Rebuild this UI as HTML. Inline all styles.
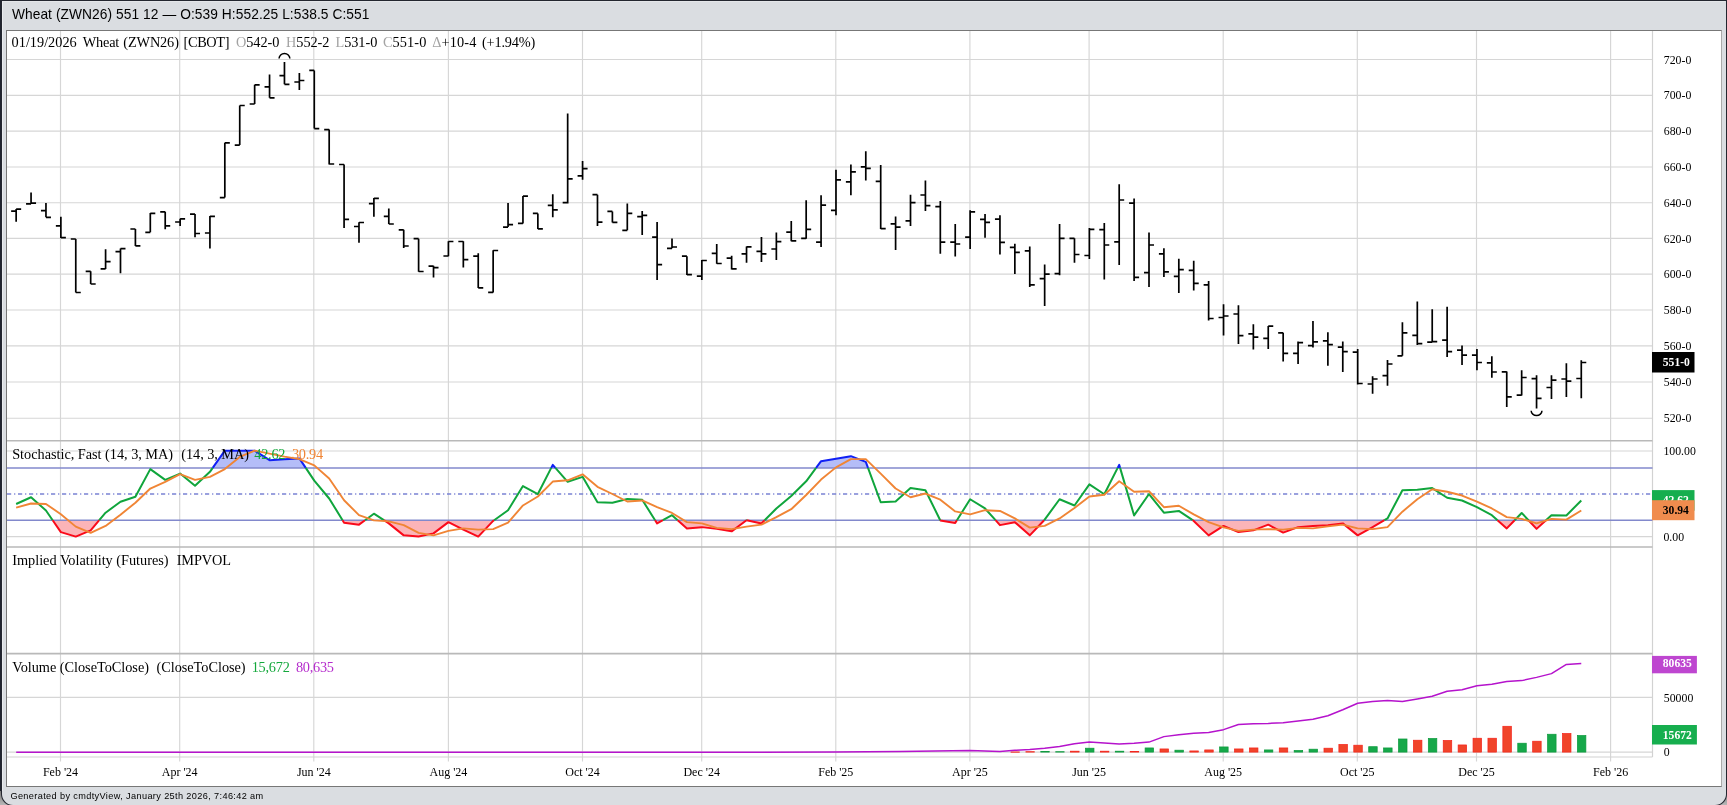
<!DOCTYPE html>
<html><head><meta charset="utf-8"><title>Wheat (ZWN26)</title>
<style>
html,body{margin:0;padding:0;}
body{width:1727px;height:805px;overflow:hidden;background:#20242f;position:relative;font-family:"Liberation Sans",sans-serif;}
#win{position:absolute;left:2px;top:1px;width:1724px;height:804px;background:#dadde1;border-radius:0 0 11px 11px;box-shadow:0 0 0 1px #23262f;}
.cr{position:absolute;bottom:0;width:14px;height:14px;background:linear-gradient(#777,#b8b8b8);}
#ht{position:absolute;left:2px;top:1px;width:1723px;height:1px;background:#e4e6e9;}
#hl{position:absolute;left:2px;top:1px;width:1px;height:790px;background:#e9ebee;}
#hdr{position:absolute;left:12px;top:6px;font-size:13.9px;line-height:16px;color:#000;white-space:nowrap;}
#ftr{position:absolute;left:10px;top:790px;font-size:10px;line-height:12px;color:#000;white-space:nowrap;}
#panel{position:absolute;left:6px;top:30px;width:1716px;height:757px;background:#fff;box-sizing:border-box;border-top:1px solid #777;border-left:1px solid #777;border-right:1px solid #aaa;border-bottom:1px solid #777;}
svg{position:absolute;left:0;top:0;will-change:transform;}
text{font-family:"Liberation Serif",serif;}
</style></head><body>
<div class="cr" style="left:0"></div><div class="cr" style="right:0"></div><div id="win"></div><div id="hl"></div><div id="ht"></div>
<div id="panel"></div>

<svg width="1727" height="805" viewBox="0 0 1727 805">
<g stroke="#d6d6d6" stroke-width="1.15">
<line x1="60.5" y1="31" x2="60.5" y2="761.5"/>
<line x1="179.7" y1="31" x2="179.7" y2="761.5"/>
<line x1="313.8" y1="31" x2="313.8" y2="761.5"/>
<line x1="448.4" y1="31" x2="448.4" y2="761.5"/>
<line x1="582.5" y1="31" x2="582.5" y2="761.5"/>
<line x1="701.7" y1="31" x2="701.7" y2="761.5"/>
<line x1="835.8" y1="31" x2="835.8" y2="761.5"/>
<line x1="969.9" y1="31" x2="969.9" y2="761.5"/>
<line x1="1089.1" y1="31" x2="1089.1" y2="761.5"/>
<line x1="1223.2" y1="31" x2="1223.2" y2="761.5"/>
<line x1="1357.3" y1="31" x2="1357.3" y2="761.5"/>
<line x1="1476.5" y1="31" x2="1476.5" y2="761.5"/>
<line x1="1610.6" y1="31" x2="1610.6" y2="761.5"/>
<line x1="7" y1="59.5" x2="1652.5" y2="59.5"/>
<line x1="7" y1="95.3" x2="1652.5" y2="95.3"/>
<line x1="7" y1="131.1" x2="1652.5" y2="131.1"/>
<line x1="7" y1="167" x2="1652.5" y2="167"/>
<line x1="7" y1="202.7" x2="1652.5" y2="202.7"/>
<line x1="7" y1="238.4" x2="1652.5" y2="238.4"/>
<line x1="7" y1="274.1" x2="1652.5" y2="274.1"/>
<line x1="7" y1="310" x2="1652.5" y2="310"/>
<line x1="7" y1="345.9" x2="1652.5" y2="345.9"/>
<line x1="7" y1="382" x2="1652.5" y2="382"/>
<line x1="7" y1="418.2" x2="1652.5" y2="418.2"/>
<line x1="7" y1="451" x2="1652.5" y2="451"/>
<line x1="7" y1="536.6" x2="1652.5" y2="536.6"/>
<line x1="7" y1="697.3" x2="1652.5" y2="697.3"/>
<line x1="7" y1="752.1" x2="1652.5" y2="752.1"/>
</g>
<g stroke="#d2d2d2" stroke-width="1.2">
<line x1="1652.5" y1="31" x2="1652.5" y2="757"/>
<line x1="7" y1="757" x2="1652.5" y2="757"/>
</g>
<g stroke="#b9b9b9" stroke-width="1.6">
<line x1="7" y1="440.8" x2="1652.5" y2="440.8"/>
<line x1="7" y1="547" x2="1652.5" y2="547"/>
<line x1="7" y1="653.6" x2="1652.5" y2="653.6"/>
</g>
<g font-size="12" text-anchor="middle" fill="#000">
<text x="60.5" y="775.5">Feb '24</text>
<text x="179.7" y="775.5">Apr '24</text>
<text x="313.8" y="775.5">Jun '24</text>
<text x="448.4" y="775.5">Aug '24</text>
<text x="582.5" y="775.5">Oct '24</text>
<text x="701.7" y="775.5">Dec '24</text>
<text x="835.8" y="775.5">Feb '25</text>
<text x="969.9" y="775.5">Apr '25</text>
<text x="1089.1" y="775.5">Jun '25</text>
<text x="1223.2" y="775.5">Aug '25</text>
<text x="1357.3" y="775.5">Oct '25</text>
<text x="1476.5" y="775.5">Dec '25</text>
<text x="1610.6" y="775.5">Feb '26</text>
</g>
<g font-size="11.8" fill="#000">
<text x="1663.8" y="63.6">720-0</text>
<text x="1663.8" y="99.4">700-0</text>
<text x="1663.8" y="135.2">680-0</text>
<text x="1663.8" y="171.1">660-0</text>
<text x="1663.8" y="206.8">640-0</text>
<text x="1663.8" y="242.5">620-0</text>
<text x="1663.8" y="278.2">600-0</text>
<text x="1663.8" y="314.1">580-0</text>
<text x="1663.8" y="350">560-0</text>
<text x="1663.8" y="386.1">540-0</text>
<text x="1663.8" y="422.3">520-0</text>
<text x="1663.4" y="454.7">100.00</text>
<text x="1663.4" y="540.7">0.00</text>
<text x="1663.8" y="701.8">50000</text>
<text x="1663.8" y="756.3">0</text>
</g>
<polygon fill="#b4bdf8" points="212.71,467.9 224.83,450.69 239.74,450.69 254.65,450.69 269.55,460.15 284.46,459.15 299.36,458.41 305.75,467.9 305.75,467.9 212.71,467.9"/>
<polygon fill="#b4bdf8" points="551.22,467.9 552.77,464.88 555.42,467.9 555.42,467.9 551.22,467.9"/>
<polygon fill="#b4bdf8" points="816.08,467.9 821.07,461.15 835.98,458.66 850.89,456.17 865.79,461.89 868.01,467.9 868.01,467.9 816.08,467.9"/>
<polygon fill="#b4bdf8" points="1117.66,467.9 1119.19,464.88 1120.08,467.9 1120.08,467.9 1117.66,467.9"/>
<polygon fill="#fbb4b8" points="52.67,520.2 60.87,532.11 75.77,536.59 90.68,530.37 99.25,520.2 99.25,520.2 52.67,520.2"/>
<polygon fill="#fbb4b8" points="342.57,520.2 344.08,522.65 358.99,524.64 365.03,520.2 365.03,520.2 342.57,520.2"/>
<polygon fill="#fbb4b8" points="383.89,520.2 388.8,523.4 403.71,535.35 418.61,536.59 433.52,533.36 448.42,522.15 463.33,529.62 478.24,536.59 493.14,520.91 494.13,520.2 494.13,520.2 383.89,520.2"/>
<polygon fill="#fbb4b8" points="655.09,520.2 657.11,523.4 662.91,520.2 662.91,520.2 655.09,520.2"/>
<polygon fill="#fbb4b8" points="677.68,520.2 686.92,528.38 701.83,527.13 716.73,528.87 731.64,531.36 746.49,520.2 746.49,520.2 677.68,520.2"/>
<polygon fill="#fbb4b8" points="746.73,520.2 761.45,523.4 764.64,520.2 764.64,520.2 746.73,520.2"/>
<polygon fill="#fbb4b8" points="940.22,520.2 940.32,520.41 955.23,522.9 956.93,520.2 956.93,520.2 940.22,520.2"/>
<polygon fill="#fbb4b8" points="995.53,520.2 999.95,525.14 1014.85,522.15 1029.76,535.35 1044.15,520.2 1044.15,520.2 995.53,520.2"/>
<polygon fill="#fbb4b8" points="1192.67,520.2 1193.72,520.91 1208.63,535.35 1223.54,525.89 1238.44,532.11 1253.35,530.37 1268.25,524.64 1283.16,532.61 1298.07,527.13 1312.97,525.89 1327.88,525.14 1342.78,523.4 1357.69,535.35 1372.6,527.13 1384.45,520.2 1384.45,520.2 1192.67,520.2"/>
<polygon fill="#fbb4b8" points="1497.51,520.2 1506.75,528.38 1514.64,520.2 1514.64,520.2 1497.51,520.2"/>
<polygon fill="#fbb4b8" points="1528.45,520.2 1536.56,528.87 1546,520.2 1546,520.2 1528.45,520.2"/>
<line x1="7" y1="467.9" x2="1652.5" y2="467.9" stroke="#8289cc" stroke-width="1.5"/>
<line x1="7" y1="520.2" x2="1652.5" y2="520.2" stroke="#8289cc" stroke-width="1.5"/>
<line x1="7" y1="494" x2="1652.5" y2="494" stroke="#7a82d4" stroke-width="1.3" stroke-dasharray="4.2,2.9,1.2,2.7"/>
<polyline fill="none" stroke="#10a53c" stroke-width="2" stroke-linejoin="round" points="16.15,503.97 31.06,497.25 45.96,510.45 52.67,520.2"/>
<polyline fill="none" stroke="#fa0a1a" stroke-width="2" stroke-linejoin="round" points="52.67,520.2 60.87,532.11 75.77,536.59 90.68,530.37 99.25,520.2"/>
<polyline fill="none" stroke="#10a53c" stroke-width="2" stroke-linejoin="round" points="99.25,520.2 105.59,512.69 120.49,501.73 135.4,496.75 150.3,469.11 165.21,479.82 180.12,473.6 195.02,485.8 209.93,471.85 212.71,467.9"/>
<polyline fill="none" stroke="#1020f5" stroke-width="2" stroke-linejoin="round" points="212.71,467.9 224.83,450.69 239.74,450.69 254.65,450.69 269.55,460.15 284.46,459.15 299.36,458.41 305.75,467.9"/>
<polyline fill="none" stroke="#10a53c" stroke-width="2" stroke-linejoin="round" points="305.75,467.9 314.27,480.57 329.18,498.5 342.57,520.2"/>
<polyline fill="none" stroke="#fa0a1a" stroke-width="2" stroke-linejoin="round" points="342.57,520.2 344.08,522.65 358.99,524.64 365.03,520.2"/>
<polyline fill="none" stroke="#10a53c" stroke-width="2" stroke-linejoin="round" points="365.03,520.2 373.89,513.69 383.89,520.2"/>
<polyline fill="none" stroke="#fa0a1a" stroke-width="2" stroke-linejoin="round" points="383.89,520.2 388.8,523.4 403.71,535.35 418.61,536.59 433.52,533.36 448.42,522.15 463.33,529.62 478.24,536.59 493.14,520.91 494.13,520.2"/>
<polyline fill="none" stroke="#10a53c" stroke-width="2" stroke-linejoin="round" points="494.13,520.2 508.05,510.2 522.95,486.05 537.86,494.01 551.22,467.9"/>
<polyline fill="none" stroke="#1020f5" stroke-width="2" stroke-linejoin="round" points="551.22,467.9 552.77,464.88 555.42,467.9"/>
<polyline fill="none" stroke="#10a53c" stroke-width="2" stroke-linejoin="round" points="555.42,467.9 567.67,481.81 582.58,476.83 597.48,502.23 612.39,502.73 627.3,498.99 642.2,499.74 655.09,520.2"/>
<polyline fill="none" stroke="#fa0a1a" stroke-width="2" stroke-linejoin="round" points="655.09,520.2 657.11,523.4 662.91,520.2"/>
<polyline fill="none" stroke="#10a53c" stroke-width="2" stroke-linejoin="round" points="662.91,520.2 672.01,515.18 677.68,520.2"/>
<polyline fill="none" stroke="#fa0a1a" stroke-width="2" stroke-linejoin="round" points="677.68,520.2 686.92,528.38 701.83,527.13 716.73,528.87 731.64,531.36 746.49,520.2"/>
<polyline fill="none" stroke="#10a53c" stroke-width="2" stroke-linejoin="round" points="746.49,520.2 746.54,520.16 746.73,520.2"/>
<polyline fill="none" stroke="#fa0a1a" stroke-width="2" stroke-linejoin="round" points="746.73,520.2 761.45,523.4 764.64,520.2"/>
<polyline fill="none" stroke="#10a53c" stroke-width="2" stroke-linejoin="round" points="764.64,520.2 776.36,508.46 791.26,496.01 806.17,481.31 816.08,467.9"/>
<polyline fill="none" stroke="#1020f5" stroke-width="2" stroke-linejoin="round" points="816.08,467.9 821.07,461.15 835.98,458.66 850.89,456.17 865.79,461.89 868.01,467.9"/>
<polyline fill="none" stroke="#10a53c" stroke-width="2" stroke-linejoin="round" points="868.01,467.9 880.7,502.23 895.6,501.48 910.51,488.04 925.42,490.28 940.22,520.2"/>
<polyline fill="none" stroke="#fa0a1a" stroke-width="2" stroke-linejoin="round" points="940.22,520.2 940.32,520.41 955.23,522.9 956.93,520.2"/>
<polyline fill="none" stroke="#10a53c" stroke-width="2" stroke-linejoin="round" points="956.93,520.2 970.13,499.24 985.04,508.46 995.53,520.2"/>
<polyline fill="none" stroke="#fa0a1a" stroke-width="2" stroke-linejoin="round" points="995.53,520.2 999.95,525.14 1014.85,522.15 1029.76,535.35 1044.15,520.2"/>
<polyline fill="none" stroke="#10a53c" stroke-width="2" stroke-linejoin="round" points="1044.15,520.2 1044.66,519.66 1059.57,499.24 1074.48,505.47 1089.38,484.3 1104.29,494.26 1117.66,467.9"/>
<polyline fill="none" stroke="#1020f5" stroke-width="2" stroke-linejoin="round" points="1117.66,467.9 1119.19,464.88 1120.08,467.9"/>
<polyline fill="none" stroke="#10a53c" stroke-width="2" stroke-linejoin="round" points="1120.08,467.9 1134.1,515.43 1149.01,494.01 1163.91,512.69 1178.82,510.95 1192.67,520.2"/>
<polyline fill="none" stroke="#fa0a1a" stroke-width="2" stroke-linejoin="round" points="1192.67,520.2 1193.72,520.91 1208.63,535.35 1223.54,525.89 1238.44,532.11 1253.35,530.37 1268.25,524.64 1283.16,532.61 1298.07,527.13 1312.97,525.89 1327.88,525.14 1342.78,523.4 1357.69,535.35 1372.6,527.13 1384.45,520.2"/>
<polyline fill="none" stroke="#10a53c" stroke-width="2" stroke-linejoin="round" points="1384.45,520.2 1387.5,518.42 1402.41,490.28 1417.31,489.78 1432.22,488.04 1447.13,497.75 1462.03,500.49 1476.94,507.21 1491.84,515.18 1497.51,520.2"/>
<polyline fill="none" stroke="#fa0a1a" stroke-width="2" stroke-linejoin="round" points="1497.51,520.2 1506.75,528.38 1514.64,520.2"/>
<polyline fill="none" stroke="#10a53c" stroke-width="2" stroke-linejoin="round" points="1514.64,520.2 1521.66,512.94 1528.45,520.2"/>
<polyline fill="none" stroke="#fa0a1a" stroke-width="2" stroke-linejoin="round" points="1528.45,520.2 1536.56,528.87 1546,520.2"/>
<polyline fill="none" stroke="#10a53c" stroke-width="2" stroke-linejoin="round" points="1546,520.2 1551.47,515.18 1566.37,515.43 1581.28,500.49"/>
<polyline fill="none" stroke="#f08535" stroke-width="1.9" stroke-linejoin="round" points="16.15,507.71 31.06,503.48 45.96,503.97 60.87,514.18 75.77,526.63 90.68,532.86 105.59,525.89 120.49,514.68 135.4,502.73 150.3,488.54 165.21,481.81 180.12,474.09 195.02,479.82 209.93,476.83 224.83,469.11 239.74,456.91 254.65,450.69 269.55,453.68 284.46,456.66 299.36,459.15 314.27,465.38 329.18,478.58 344.08,500.24 358.99,515.18 373.89,520.41 388.8,521.4 403.71,525.14 418.61,532.86 433.52,535.35 448.42,530.87 463.33,528.38 478.24,529.62 493.14,529.12 508.05,522.65 522.95,505.47 537.86,496.5 552.77,481.56 567.67,480.32 582.58,474.34 597.48,486.79 612.39,494.01 627.3,501.48 642.2,500.49 657.11,507.21 672.01,512.94 686.92,522.15 701.83,523.4 716.73,527.88 731.64,529.12 746.54,526.63 761.45,524.64 776.36,517.17 791.26,509.2 806.17,495.01 821.07,479.57 835.98,467.37 850.89,459.15 865.79,459.15 880.7,473.6 895.6,488.54 910.51,497.25 925.42,493.52 940.32,499.74 955.23,511.44 970.13,514.43 985.04,510.2 999.95,510.95 1014.85,518.42 1029.76,527.63 1044.66,525.89 1059.57,518.42 1074.48,507.96 1089.38,496.5 1104.29,494.76 1119.19,481.31 1134.1,491.77 1149.01,491.27 1163.91,507.21 1178.82,505.72 1193.72,514.43 1208.63,522.15 1223.54,527.38 1238.44,530.87 1253.35,529.62 1268.25,529.12 1283.16,529.62 1298.07,527.88 1312.97,528.38 1327.88,526.38 1342.78,524.64 1357.69,528.38 1372.6,529.12 1387.5,527.13 1402.41,511.69 1417.31,499.24 1432.22,489.28 1447.13,491.77 1462.03,495.51 1476.94,501.73 1491.84,508.46 1506.75,517.17 1521.66,518.91 1536.56,523.4 1551.47,518.91 1566.37,519.66 1581.28,510.45"/>
<g stroke="#000" stroke-width="1.7" fill="none">
<path d="M16.15 209.1V221.8M11.15 211.1H16.15M16.15 209.1H21.15"/>
<path d="M31.06 192.4V203.6M26.06 203.9H31.06M31.06 203.1H36.06"/>
<path d="M45.96 203.1V217.3M40.96 210.6H45.96M45.96 217.3H50.96"/>
<path d="M60.87 216.8V238M55.87 225.8H60.87M60.87 237.7H65.87"/>
<path d="M75.77 239V292.5M70.77 239H75.77M75.77 292.5H80.77"/>
<path d="M90.68 271.3V284M85.68 271.3H90.68M90.68 284H95.68"/>
<path d="M105.59 249.2V269.1M100.59 268.9H105.59M105.59 261.6H110.59"/>
<path d="M120.49 248.4V273.3M115.49 251.7H120.49M120.49 248.7H125.49"/>
<path d="M135.4 229V245.9M130.4 229H135.4M135.4 245.9H140.4"/>
<path d="M150.3 213.1V232.3M145.3 232.3H150.3M150.3 213.3H155.3"/>
<path d="M165.21 211.8V229.3M160.21 211.8H165.21M165.21 225.8H170.21"/>
<path d="M180.12 218.8V226M175.12 222H180.12M180.12 218.8H185.12"/>
<path d="M195.02 214.1V237.2M190.02 214.1H195.02M195.02 233.5H200.02"/>
<path d="M209.93 216.1V248.4M204.93 233H209.93M209.93 216.3H214.93"/>
<path d="M224.83 142.8V197.6M219.83 197.6H224.83M224.83 142.8H229.83"/>
<path d="M239.74 105.5V145.1M234.74 145.1H239.74M239.74 105.5H244.74"/>
<path d="M254.65 84.8V104M249.65 104H254.65M254.65 84.8H259.65"/>
<path d="M269.55 74.4V97.8M264.55 86.8H269.55M269.55 97.8H274.55"/>
<path d="M284.46 61.9V84.3M279.46 75.6H284.46M284.46 84.3H289.46"/>
<path d="M299.36 73V90M294.36 82H299.36M299.36 80.5H304.36"/>
<path d="M314.27 70.4V128.6M309.27 70.4H314.27M314.27 128.6H319.27"/>
<path d="M329.18 129.6V164.5M324.18 129.6H329.18M329.18 164H334.18"/>
<path d="M344.08 164.5V228M339.08 164.5H344.08M344.08 219.3H349.08"/>
<path d="M358.99 222.3V242.7M353.99 226.5H358.99M358.99 222.5H363.99"/>
<path d="M373.89 198.1V216.8M368.89 203.6H373.89M373.89 198.4H378.89"/>
<path d="M388.8 208.6V224M383.8 216.3H388.8M388.8 224H393.8"/>
<path d="M403.71 229.8V248M398.71 229.8H403.71M403.71 246H408.71"/>
<path d="M418.61 238.7V271.8M413.61 238.7H418.61M418.61 271.5H423.61"/>
<path d="M433.52 265.7V277.4M428.52 266.2H433.52M433.52 267.7H438.52"/>
<path d="M448.42 241.3V256.2M443.42 256H448.42M448.42 241.5H453.42"/>
<path d="M463.33 241.3V267.4M458.33 241.5H463.33M463.33 259.7H468.33"/>
<path d="M478.24 253.3V288.1M473.24 256.2H478.24M478.24 287.9H483.24"/>
<path d="M493.14 250.3V292.6M488.14 292.4H493.14M493.14 250.5H498.14"/>
<path d="M508.05 203V227.1M503.05 227.1H508.05M508.05 224.6H513.05"/>
<path d="M522.95 196V223.4M517.95 223.4H522.95M522.95 196.2H527.95"/>
<path d="M537.86 213.4V229.1M532.86 213.4H537.86M537.86 228.9H542.86"/>
<path d="M552.77 194.2V217.2M547.77 205.4H552.77M552.77 209.9H557.77"/>
<path d="M567.67 113.5V203.5M562.67 202.7H567.67M567.67 178.8H572.67"/>
<path d="M582.58 161.1V179.8M577.58 175.8H582.58M582.58 168.6H587.58"/>
<path d="M597.48 194.7V225.9M592.48 194.7H597.48M597.48 222.1H602.48"/>
<path d="M612.39 211.4V222.6M607.39 211.4H612.39M612.39 222.4H617.39"/>
<path d="M627.3 203.5V230.3M622.3 230.3H627.3M627.3 213.4H632.3"/>
<path d="M642.2 210.9V235.1M637.2 216.7H642.2M642.2 215.4H647.2"/>
<path d="M657.11 222.1V279.9M652.11 237.1H657.11M657.11 264.7H662.11"/>
<path d="M672.01 238.6V248.3M667.01 248.3H672.01M672.01 247H677.01"/>
<path d="M686.92 256.2V274.9M681.92 256.2H686.92M686.92 274.7H691.92"/>
<path d="M701.83 260V279.9M696.83 276.2H701.83M701.83 260.5H706.83"/>
<path d="M716.73 244V263.7M711.73 253.3H716.73M716.73 263.5H721.73"/>
<path d="M731.64 255.7V269.4M726.64 258.2H731.64M731.64 268.9H736.64"/>
<path d="M746.54 246.5V262.7M741.54 253.8H746.54M746.54 246.8H751.54"/>
<path d="M761.45 237.1V262M756.45 251.3H761.45M761.45 253.8H766.45"/>
<path d="M776.36 232.6V260M771.36 249H776.36M776.36 241.6H781.36"/>
<path d="M791.26 220.9V241.3M786.26 232.1H791.26M791.26 240.8H796.26"/>
<path d="M806.17 200.2V238.8M801.17 238.3H806.17M806.17 229.4H811.17"/>
<path d="M821.07 195.2V247M816.07 242.1H821.07M821.07 205.2H826.07"/>
<path d="M835.98 169.8V215.2M830.98 210.4H835.98M835.98 179.8H840.98"/>
<path d="M850.89 164.4V195.2M845.89 181.8H850.89M850.89 171.8H855.89"/>
<path d="M865.79 151.2V180.5M860.79 166.9H865.79M865.79 168.3H870.79"/>
<path d="M880.7 165.1V228.9M875.7 181.3H880.7M880.7 228.6H885.7"/>
<path d="M895.6 216.4V250M890.6 223.9H895.6M895.6 227.1H900.6"/>
<path d="M910.51 194.7V225.9M905.51 220.9H910.51M910.51 202.7H915.51"/>
<path d="M925.42 180.5V210.9M920.42 195H925.42M925.42 205.7H930.42"/>
<path d="M940.32 201V253.8M935.32 206.7H940.32M940.32 242.1H945.32"/>
<path d="M955.23 223.9V256.5M950.23 242.1H955.23M955.23 244H960.23"/>
<path d="M970.13 210.2V249M965.13 237.1H970.13M970.13 211.9H975.13"/>
<path d="M985.04 213.9V237.8M980.04 219.4H985.04M985.04 222.4H990.04"/>
<path d="M999.95 215.2V254.5M994.95 219.1H999.95M999.95 242.3H1004.95"/>
<path d="M1014.85 243.8V273.9M1009.85 247.3H1014.85M1014.85 252.3H1019.85"/>
<path d="M1029.76 246.5V286.9M1024.76 250.8H1029.76M1029.76 284.9H1034.76"/>
<path d="M1044.66 264.5V306M1039.66 278.7H1044.66M1044.66 274.2H1049.66"/>
<path d="M1059.57 224.1V275.2M1054.57 273.7H1059.57M1059.57 238.3H1064.57"/>
<path d="M1074.48 238.3V262.7M1069.48 238.3H1074.48M1074.48 254.5H1079.48"/>
<path d="M1089.38 227.9V259M1084.38 255.5H1089.38M1089.38 229.4H1094.38"/>
<path d="M1104.29 222.9V279.4M1099.29 229.6H1104.29M1104.29 245H1109.29"/>
<path d="M1119.19 184.3V265M1114.19 241.8H1119.19M1119.19 200H1124.19"/>
<path d="M1134.1 198.5V280.9M1129.1 203.2H1134.1M1134.1 277.4H1139.1"/>
<path d="M1149.01 232.6V286.9M1144.01 272.7H1149.01M1149.01 245H1154.01"/>
<path d="M1163.91 248.3V276.9M1158.91 253.8H1163.91M1163.91 271.9H1168.91"/>
<path d="M1178.82 258.7V293.1M1173.82 276.4H1178.82M1178.82 269.7H1183.82"/>
<path d="M1193.72 260.7V290.6M1188.72 270.4H1193.72M1193.72 283.4H1198.72"/>
<path d="M1208.63 281.1V320.5M1203.63 284.9H1208.63M1208.63 318.5H1213.63"/>
<path d="M1223.54 304.3V335.4M1218.54 317.5H1223.54M1223.54 316H1228.54"/>
<path d="M1238.44 305.3V343.9M1233.44 314H1238.44M1238.44 335.7H1243.44"/>
<path d="M1253.35 324.2V349.6M1248.35 333.9H1253.35M1253.35 337.2H1258.35"/>
<path d="M1268.25 325.9V348.9M1263.25 338.4H1268.25M1268.25 326.2H1273.25"/>
<path d="M1283.16 332.7V361.6M1278.16 332.9H1283.16M1283.16 353.3H1288.16"/>
<path d="M1298.07 341.6V364M1293.07 353.3H1298.07M1298.07 342.6H1303.07"/>
<path d="M1312.97 321V347.6M1307.97 345.6H1312.97M1312.97 341.9H1317.97"/>
<path d="M1327.88 332.2V365.8M1322.88 340.9H1327.88M1327.88 344.6H1332.88"/>
<path d="M1342.78 341.4V372M1337.78 347.1H1342.78M1342.78 351.6H1347.78"/>
<path d="M1357.69 349.1V384.5M1352.69 352.1H1357.69M1357.69 383.5H1362.69"/>
<path d="M1372.6 376.2V393.7M1367.6 384H1372.6M1372.6 379H1377.6"/>
<path d="M1387.5 360.1V385.7M1382.5 375.7H1387.5M1387.5 364H1392.5"/>
<path d="M1402.41 322.2V355.8M1397.41 355.8H1402.41M1402.41 332.9H1407.41"/>
<path d="M1417.31 301.5V345.1M1412.31 335.4H1417.31M1417.31 343.6H1422.31"/>
<path d="M1432.22 309.3V342.6M1427.22 342.1H1432.22M1432.22 341.6H1437.22"/>
<path d="M1447.13 306.8V357.1M1442.13 340.1H1447.13M1447.13 351.6H1452.13"/>
<path d="M1462.03 345.4V365M1457.03 350.1H1462.03M1462.03 355.1H1467.03"/>
<path d="M1476.94 348.9V370.3M1471.94 355.1H1476.94M1476.94 362.5H1481.94"/>
<path d="M1491.84 356.3V377.7M1486.84 362.8H1491.84M1491.84 372H1496.84"/>
<path d="M1506.75 371.5V406.9M1501.75 371.8H1506.75M1506.75 396.9H1511.75"/>
<path d="M1521.66 370.3V395.4M1516.66 395.2H1521.66M1521.66 377.5H1526.66"/>
<path d="M1536.56 375.2V408.6M1531.56 378.7H1536.56M1536.56 398.4H1541.56"/>
<path d="M1551.47 375.2V398.9M1546.47 387.5H1551.47M1551.47 380.2H1556.47"/>
<path d="M1566.37 363.3V396.9M1561.37 379H1566.37M1566.37 381.2H1571.37"/>
<path d="M1581.28 360.3V398.2M1576.28 378.5H1581.28M1581.28 362.5H1586.28"/>
</g>
<path d="M279.06 58.6 A5.4 5.1 0 0 1 289.86 58.6" stroke="#000" stroke-width="1.5" fill="none"/>
<path d="M1531.16 410.8 A5.4 4.7 0 0 0 1541.96 410.8" stroke="#000" stroke-width="1.5" fill="none"/>
<rect x="1010.95" y="751.92" width="8.5" height="0.3" fill="#f0442a" stroke="#f5221a" stroke-width="0.7"/>
<rect x="1025.86" y="751.67" width="8.5" height="0.43" fill="#f0442a" stroke="#f5221a" stroke-width="0.7"/>
<rect x="1040.76" y="751.43" width="8.5" height="0.67" fill="#16a84a" stroke="#0c9a3c" stroke-width="0.7"/>
<rect x="1055.67" y="751.67" width="8.5" height="0.43" fill="#16a84a" stroke="#0c9a3c" stroke-width="0.7"/>
<rect x="1070.58" y="751.18" width="8.5" height="0.92" fill="#f0442a" stroke="#f5221a" stroke-width="0.7"/>
<rect x="1085.48" y="748.19" width="8.5" height="3.91" fill="#16a84a" stroke="#0c9a3c" stroke-width="0.7"/>
<rect x="1100.39" y="751.18" width="8.5" height="0.92" fill="#f0442a" stroke="#f5221a" stroke-width="0.7"/>
<rect x="1115.29" y="751.18" width="8.5" height="0.92" fill="#16a84a" stroke="#0c9a3c" stroke-width="0.7"/>
<rect x="1130.2" y="751.43" width="8.5" height="0.67" fill="#f0442a" stroke="#f5221a" stroke-width="0.7"/>
<rect x="1145.11" y="747.94" width="8.5" height="4.16" fill="#16a84a" stroke="#0c9a3c" stroke-width="0.7"/>
<rect x="1160.01" y="748.94" width="8.5" height="3.16" fill="#f0442a" stroke="#f5221a" stroke-width="0.7"/>
<rect x="1174.92" y="750.18" width="8.5" height="1.92" fill="#16a84a" stroke="#0c9a3c" stroke-width="0.7"/>
<rect x="1189.82" y="750.93" width="8.5" height="1.17" fill="#f0442a" stroke="#f5221a" stroke-width="0.7"/>
<rect x="1204.73" y="749.93" width="8.5" height="2.17" fill="#f0442a" stroke="#f5221a" stroke-width="0.7"/>
<rect x="1219.64" y="746.94" width="8.5" height="5.16" fill="#16a84a" stroke="#0c9a3c" stroke-width="0.7"/>
<rect x="1234.54" y="748.94" width="8.5" height="3.16" fill="#f0442a" stroke="#f5221a" stroke-width="0.7"/>
<rect x="1249.45" y="747.94" width="8.5" height="4.16" fill="#f0442a" stroke="#f5221a" stroke-width="0.7"/>
<rect x="1264.35" y="749.93" width="8.5" height="2.17" fill="#16a84a" stroke="#0c9a3c" stroke-width="0.7"/>
<rect x="1279.26" y="747.94" width="8.5" height="4.16" fill="#f0442a" stroke="#f5221a" stroke-width="0.7"/>
<rect x="1294.17" y="750.43" width="8.5" height="1.67" fill="#16a84a" stroke="#0c9a3c" stroke-width="0.7"/>
<rect x="1309.07" y="749.18" width="8.5" height="2.92" fill="#16a84a" stroke="#0c9a3c" stroke-width="0.7"/>
<rect x="1323.98" y="748.19" width="8.5" height="3.91" fill="#f0442a" stroke="#f5221a" stroke-width="0.7"/>
<rect x="1338.88" y="744.45" width="8.5" height="7.65" fill="#f0442a" stroke="#f5221a" stroke-width="0.7"/>
<rect x="1353.79" y="745.2" width="8.5" height="6.9" fill="#f0442a" stroke="#f5221a" stroke-width="0.7"/>
<rect x="1368.7" y="746.69" width="8.5" height="5.41" fill="#16a84a" stroke="#0c9a3c" stroke-width="0.7"/>
<rect x="1383.6" y="747.94" width="8.5" height="4.16" fill="#16a84a" stroke="#0c9a3c" stroke-width="0.7"/>
<rect x="1398.51" y="738.98" width="8.5" height="13.12" fill="#16a84a" stroke="#0c9a3c" stroke-width="0.7"/>
<rect x="1413.41" y="740.22" width="8.5" height="11.88" fill="#f0442a" stroke="#f5221a" stroke-width="0.7"/>
<rect x="1428.32" y="738.48" width="8.5" height="13.62" fill="#16a84a" stroke="#0c9a3c" stroke-width="0.7"/>
<rect x="1443.23" y="740.47" width="8.5" height="11.63" fill="#f0442a" stroke="#f5221a" stroke-width="0.7"/>
<rect x="1458.13" y="744.95" width="8.5" height="7.15" fill="#f0442a" stroke="#f5221a" stroke-width="0.7"/>
<rect x="1473.04" y="738.23" width="8.5" height="13.87" fill="#f0442a" stroke="#f5221a" stroke-width="0.7"/>
<rect x="1487.94" y="738.23" width="8.5" height="13.87" fill="#f0442a" stroke="#f5221a" stroke-width="0.7"/>
<rect x="1502.85" y="726.28" width="8.5" height="25.82" fill="#f0442a" stroke="#f5221a" stroke-width="0.7"/>
<rect x="1517.76" y="743.21" width="8.5" height="8.89" fill="#16a84a" stroke="#0c9a3c" stroke-width="0.7"/>
<rect x="1532.66" y="741.22" width="8.5" height="10.88" fill="#f0442a" stroke="#f5221a" stroke-width="0.7"/>
<rect x="1547.57" y="734.24" width="8.5" height="17.86" fill="#16a84a" stroke="#0c9a3c" stroke-width="0.7"/>
<rect x="1562.47" y="733.5" width="8.5" height="18.6" fill="#f0442a" stroke="#f5221a" stroke-width="0.7"/>
<rect x="1577.38" y="735.49" width="8.5" height="16.61" fill="#16a84a" stroke="#0c9a3c" stroke-width="0.7"/>
<polyline fill="none" stroke="#b513cc" stroke-width="1.5" stroke-linejoin="round" points="16.2,752.3 740,752.3 835,751.9 900,751.4 970,750.6 999.95,751.57 1014.85,750.33 1029.76,749.58 1044.66,748.34 1059.57,746.59 1074.48,743.85 1089.38,742.11 1104.29,743.11 1119.19,744.1 1134.1,743.36 1149.01,742.11 1163.91,736.63 1178.82,734.64 1193.72,733.15 1208.63,732.4 1223.54,729.66 1238.44,724.43 1253.35,723.69 1268.25,723.44 1283.16,722.69 1298.07,720.95 1312.97,719.2 1327.88,715.72 1342.78,709.74 1357.69,703.27 1372.6,701.52 1387.5,700.53 1402.41,701.52 1417.31,699.03 1432.22,696.29 1447.13,691.31 1462.03,689.82 1476.94,685.84 1491.84,684.34 1506.75,681.6 1521.66,680.61 1536.56,677.37 1551.47,673.64 1566.37,664.42 1581.28,663.43"/>
<g font-size="14.3">
<text x="11.6" y="46.5" textLength="65.1" lengthAdjust="spacing" fill="#000" xml:space="preserve">01/19/2026</text>
<text x="82.8" y="46.5" textLength="36.5" lengthAdjust="spacing" fill="#000" xml:space="preserve">Wheat</text>
<text x="123.3" y="46.5" textLength="55.6" lengthAdjust="spacing" fill="#000" xml:space="preserve">(ZWN26)</text>
<text x="183.6" y="46.5" textLength="45.8" lengthAdjust="spacing" fill="#000" xml:space="preserve">[CBOT]</text>
<text x="236" y="46.5" textLength="43.3" lengthAdjust="spacing" fill="#000" xml:space="preserve"><tspan fill="#a3a3a3">O</tspan>542-0</text>
<text x="286" y="46.5" textLength="43.5" lengthAdjust="spacing" fill="#000" xml:space="preserve"><tspan fill="#a3a3a3">H</tspan>552-2</text>
<text x="335.5" y="46.5" textLength="41.8" lengthAdjust="spacing" fill="#000" xml:space="preserve"><tspan fill="#a3a3a3">L</tspan>531-0</text>
<text x="383" y="46.5" textLength="43.3" lengthAdjust="spacing" fill="#000" xml:space="preserve"><tspan fill="#a3a3a3">C</tspan>551-0</text>
<text x="432.3" y="46.5" textLength="44" lengthAdjust="spacing" fill="#000" xml:space="preserve"><tspan fill="#a3a3a3">Δ</tspan>+10-4</text>
<text x="482" y="46.5" textLength="53.2" lengthAdjust="spacing" fill="#000" xml:space="preserve">(+1.94%)</text>
<text x="12.2" y="459" textLength="160.9" lengthAdjust="spacing" fill="#000" xml:space="preserve">Stochastic, Fast (14, 3, MA)</text>
<text x="181.3" y="459" textLength="67.7" lengthAdjust="spacing" fill="#000" xml:space="preserve">(14, 3, MA)</text>
<text x="254.2" y="459" textLength="31.3" lengthAdjust="spacing" fill="#14a83c" xml:space="preserve">42.62</text>
<text x="291.9" y="459" textLength="31.2" lengthAdjust="spacing" fill="#f08535" xml:space="preserve">30.94</text>
<text x="12.2" y="565.3" textLength="156.4" lengthAdjust="spacing" fill="#000" xml:space="preserve">Implied Volatility (Futures)</text>
<text x="176.7" y="565.3" textLength="54.3" lengthAdjust="spacing" fill="#000" xml:space="preserve">IMPVOL</text>
<text x="12.2" y="671.6" textLength="136.8" lengthAdjust="spacing" fill="#000" xml:space="preserve">Volume (CloseToClose)</text>
<text x="156.5" y="671.6" textLength="89.1" lengthAdjust="spacing" fill="#000" xml:space="preserve">(CloseToClose)</text>
<text x="251.7" y="671.6" textLength="38.1" lengthAdjust="spacing" fill="#14a83c" xml:space="preserve">15,672</text>
<text x="295.9" y="671.6" textLength="38.1" lengthAdjust="spacing" fill="#b52ccc" xml:space="preserve">80,635</text>
</g>
<text x="11.9" y="18.8" textLength="357.5" lengthAdjust="spacing" style="font-family:'Liberation Sans',sans-serif" font-size="13.75" fill="#000">Wheat (ZWN26) 551 12 — O:539 H:552.25 L:538.5 C:551</text>
<text x="10.4" y="798.8" textLength="252.8" lengthAdjust="spacing" style="font-family:'Liberation Sans',sans-serif" font-size="9.17" fill="#000">Generated by cmdtyView, January 25th 2026, 7:46:42 am</text>
<rect x="1652" y="352" width="42.5" height="20.5" fill="#000"/>
<text x="1662.8" y="365.8" font-size="11.6" font-weight="bold" fill="#fff">551-0</text>
<rect x="1652" y="490.1" width="42.5" height="20.6" fill="#16ae4e"/>
<text x="1662.8" y="503.7" font-size="11.6" font-weight="bold" fill="#fff">42.62</text>
<rect x="1652" y="500.2" width="42.5" height="20" fill="#f08c4e"/>
<text x="1662.8" y="513.6" font-size="11.6" font-weight="bold" fill="#000">30.94</text>
<rect x="1652" y="655.9" width="44.9" height="17.4" fill="#be46d0"/>
<text x="1662.8" y="666.7" font-size="11.6" font-weight="bold" fill="#fff">80635</text>
<rect x="1652" y="725" width="44.9" height="19.5" fill="#16ae4e"/>
<text x="1662.8" y="738.5" font-size="11.6" font-weight="bold" fill="#fff">15672</text>
</svg></body></html>
